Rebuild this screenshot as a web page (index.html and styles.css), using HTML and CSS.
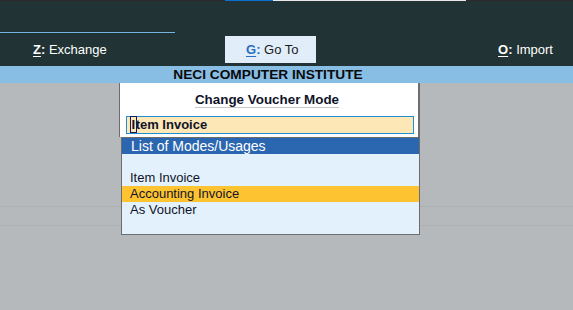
FILE: index.html
```html
<!DOCTYPE html>
<html lang="en">
<head>
  <meta charset="UTF-8">
  <title>Change Voucher Mode</title>
  <link rel="stylesheet" href="styles.css">
</head>
<body>
  <div class="top-strip">
    <span class="strip-dark strip-left"></span>
    <span class="strip-blue"></span>
    <span class="strip-light"></span>
    <span class="strip-dark strip-right"></span>
  </div>

  <header class="toolbar">
    <div class="toolbar-line"></div>
    <nav class="menu">
      <div class="menu-item exchange"><span class="key"><u>Z</u>:</span> Exchange</div>
      <div class="menu-item goto"><span class="key"><u>G</u>:</span> Go To</div>
      <div class="menu-item import"><span class="key"><u>O</u>:</span> Import</div>
    </nav>
  </header>

  <div class="title-bar">NECI COMPUTER INSTITUTE</div>

  <main class="workspace">
    <div class="dialog">
      <div class="dialog-title"><span>Change Voucher Mode</span></div>
      <div class="dialog-input"><span class="cursor">I</span>tem Invoice</div>
    </div>
    <div class="list">
      <div class="list-header">List of Modes/Usages</div>
      <div class="list-row"></div>
      <div class="list-row">Item Invoice</div>
      <div class="list-row selected">Accounting Invoice</div>
      <div class="list-row">As Voucher</div>
      <div class="list-row"></div>
    </div>
  </main>
</body>
</html>
```

FILE: styles.css
```css
:root {
  --toolbar: #213334;
  --title-bar: #88bde4;
  --workspace: #b5b9bc;
  --workspace-line: #adb1b4;
  --list-bg: #e3f1fc;
  --list-header: #2b66b0;
  --selected: #fec330;
  --frame: #6d6d6d;
  --text: #10142a;
}

* {
  margin: 0;
  padding: 0;
  box-sizing: border-box;
}

body {
  font-family: 'Liberation Sans', Arial, sans-serif;
  font-size: 13px;
  background-color: var(--workspace);
  color: var(--text);
  width: 573px;
  height: 310px;
  overflow: hidden;
}

/* thin strip along the very top */
.top-strip {
  display: flex;
  height: 1px;
}

.strip-dark {
  background-color: #2b2b2b;
}

.strip-left {
  width: 225px;
}

.strip-blue {
  width: 48px;
  background-color: #0c6fd3;
}

.strip-light {
  width: 193px;
  background-color: #e8e8e8;
}

.strip-right {
  flex: 1;
}

/* toolbar */
.toolbar {
  background-color: var(--toolbar);
  height: 65px;
  padding-top: 31px;
}

.toolbar-line {
  width: 175px;
  height: 1px;
  background-color: #76b4e0;
}

.menu {
  display: flex;
  align-items: center;
  height: 27px;
  margin-top: 3px;
  color: #ffffff;
}

.menu-item {
  display: flex;
  align-items: center;
  height: 100%;
  white-space: pre;
}

.key {
  font-weight: 700;
}

.key u {
  text-underline-offset: 2px;
}

.exchange {
  margin-left: 33px;
  width: 192px;
}

.goto {
  width: 91px;
  padding-left: 21px;
  background-color: #e1eefa;
  color: #1b1b1b;
}

.goto .key {
  color: #2a6fc0;
}

.import {
  margin-left: auto;
  margin-right: 20px;
}

/* company name */
.title-bar {
  height: 17px;
  line-height: 17px;
  background-color: var(--title-bar);
  font-size: 13.7px;
  font-weight: 700;
  color: #0a0a0a;
  text-align: center;
  padding-right: 37px;
}

/* main area with the faint row lines */
.workspace {
  height: 227px;
  background-image:
    linear-gradient(var(--workspace-line), var(--workspace-line)),
    linear-gradient(var(--workspace-line), var(--workspace-line));
  background-size: 100% 1px, 100% 1px;
  background-position: 0 123px, 0 142px;
  background-repeat: no-repeat;
}

.dialog {
  margin-left: 119px;
  width: 301px;
  height: 54px;
  background-color: #ffffff;
  border-left: 1px solid var(--frame);
  border-right: 2px solid var(--frame);
  padding: 9px 4px 0 6px;
}

.dialog-title {
  text-align: center;
  padding-right: 6px;
}

.dialog-title span {
  display: inline-block;
  height: 16px;
  line-height: 15px;
  font-size: 13.4px;
  font-weight: 700;
  border-bottom: 1px solid #c8c8c8;
}

.dialog-input {
  margin-top: 8px;
  height: 18px;
  line-height: 16px;
  border: 1px solid #1e8fd0;
  background-color: #fde7b6;
  padding-left: 4px;
  font-weight: 700;
}

.cursor {
  outline: 1px solid #141e5a;
  outline-offset: 0;
  padding: 0 0.5px;
}

/* list of modes popup */
.list {
  margin-left: 121px;
  width: 299px;
  border: 1px solid var(--frame);
  background-color: var(--list-bg);
}

.list-header {
  height: 16px;
  line-height: 16px;
  padding-left: 9px;
  background-color: var(--list-header);
  color: #ffffff;
  font-size: 14px;
}

.list-row {
  height: 16px;
  line-height: 16px;
  padding-left: 8px;
}

.list-row.selected {
  background-color: var(--selected);
}
```
